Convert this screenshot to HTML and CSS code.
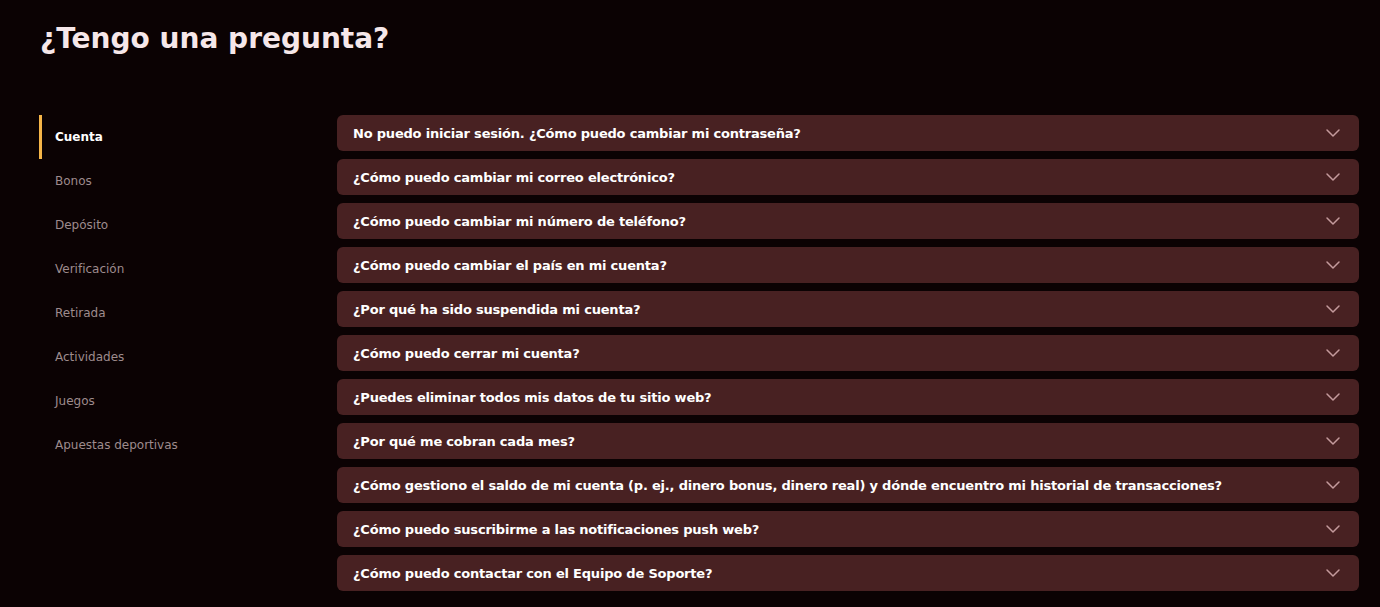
FILE: index.html
```html
<!DOCTYPE html>
<html lang="es">
<head>
    <meta charset="UTF-8">
    <meta name="viewport" content="width=device-width, initial-scale=1.0">
    <title>Preguntas frecuentes</title>

    <link rel="stylesheet" href="styles.css">
</head>
<body>
    <header class="faq-header">
        <h1>¿Tengo una pregunta?</h1>
    </header>

    <main class="faq">
        <nav class="faq-menu">
            <a class="faq-menu-item active" href="#">Cuenta</a>
            <a class="faq-menu-item" href="#">Bonos</a>
            <a class="faq-menu-item" href="#">Depósito</a>
            <a class="faq-menu-item" href="#">Verificación</a>
            <a class="faq-menu-item" href="#">Retirada</a>
            <a class="faq-menu-item" href="#">Actividades</a>
            <a class="faq-menu-item" href="#">Juegos</a>
            <a class="faq-menu-item" href="#">Apuestas deportivas</a>
        </nav>

        <section class="faq-list" id="faqList"></section>
    </main>

    <script>
        const preguntas = [
            "No puedo iniciar sesión. ¿Cómo puedo cambiar mi contraseña?",
            "¿Cómo puedo cambiar mi correo electrónico?",
            "¿Cómo puedo cambiar mi número de teléfono?",
            "¿Cómo puedo cambiar el país en mi cuenta?",
            "¿Por qué ha sido suspendida mi cuenta?",
            "¿Cómo puedo cerrar mi cuenta?",
            "¿Puedes eliminar todos mis datos de tu sitio web?",
            "¿Por qué me cobran cada mes?",
            "¿Cómo gestiono el saldo de mi cuenta (p. ej., dinero bonus, dinero real) y dónde encuentro mi historial de transacciones?",
            "¿Cómo puedo suscribirme a las notificaciones push web?",
            "¿Cómo puedo contactar con el Equipo de Soporte?"
        ];

        const lista = document.getElementById("faqList");

        preguntas.forEach((texto) => {
            const item = document.createElement("div");
            item.className = "faq-item";
            item.innerHTML = `
                <span class="faq-question">${texto}</span>
                <svg class="faq-chevron" viewBox="0 0 16 16" width="16" height="16">
                    <polyline points="2,5 8,11 14,5" fill="none" stroke="currentColor" stroke-width="1.5" stroke-linecap="round" stroke-linejoin="round"/>
                </svg>`;
            lista.appendChild(item);
        });
    </script>
</body>
</html>
```

FILE: styles.css
```css
*{
    box-sizing: border-box;
    font-family: "DejaVu Sans", Arial, sans-serif;
}

body{
    margin: 0;
    background-color: #0b0203;
    color: #f4e6e8;
}

.faq-header{
    padding: 21px 40px 0;
}

.faq-header h1{
    margin: 0;
    font-size: 28px;
    font-weight: bold;
    line-height: 36px;
    color: #f6e7e9;
}

.faq{
    display: flex;
    padding: 58px 21px 0 39px;
}

.faq-menu{
    width: 298px;
    flex-shrink: 0;
    display: flex;
    flex-direction: column;
}

.faq-menu-item{
    height: 44px;
    display: flex;
    align-items: center;
    padding-left: 13px;
    border-left: 3px solid transparent;
    font-size: 12px;
    color: #9e8b8d;
    text-decoration: none;
}

.faq-menu-item.active{
    border-left-color: #f5b548;
    color: #ffffff;
    font-weight: bold;
}

.faq-list{
    flex: 1;
    display: flex;
    flex-direction: column;
    gap: 8px;
}

.faq-item{
    height: 36px;
    display: flex;
    align-items: center;
    justify-content: space-between;
    padding: 0 18px 0 16px;
    background-color: #482122;
    border-radius: 6px;
}

.faq-question{
    font-size: 13px;
    font-weight: bold;
    letter-spacing: -0.2px;
    color: #ffffff;
}

.faq-chevron{
    color: #c49a9c;
}
```
